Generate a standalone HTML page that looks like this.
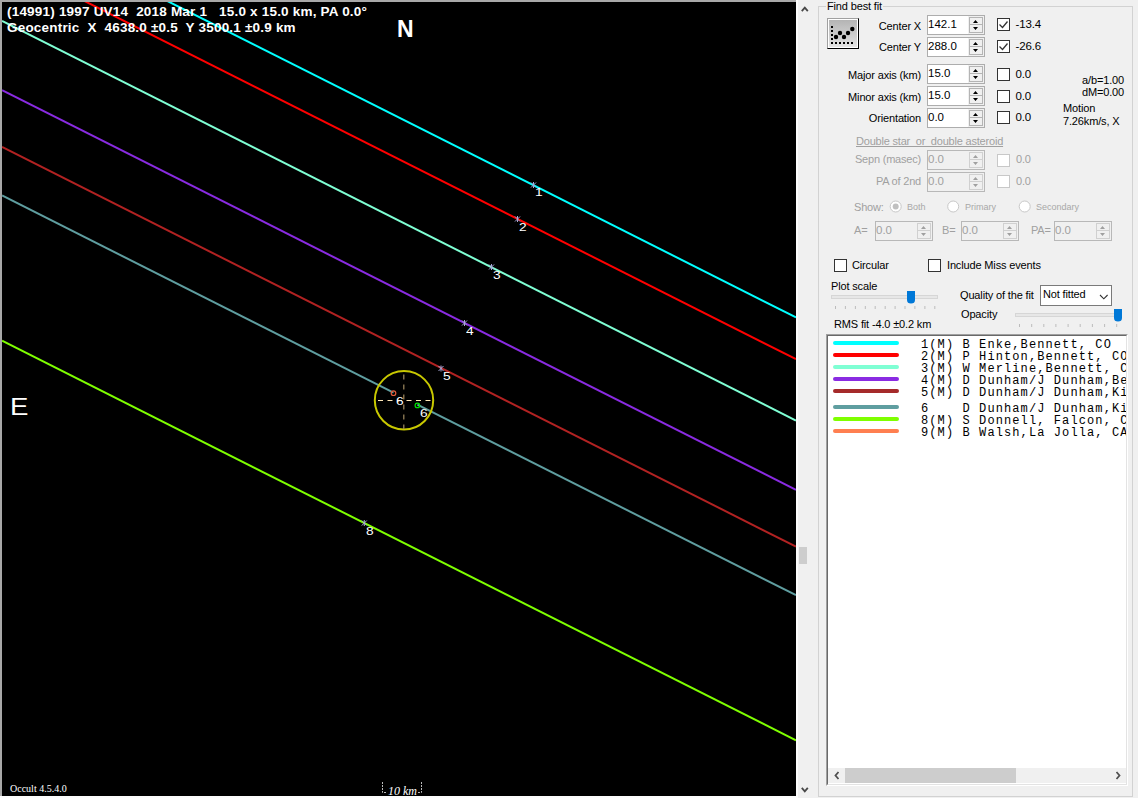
<!DOCTYPE html><html><head><meta charset="utf-8"><style>
*{margin:0;padding:0;box-sizing:border-box}
html,body{width:1138px;height:798px;overflow:hidden;background:#f0f0f0;font-family:"Liberation Sans",sans-serif}
.a{position:absolute;white-space:pre;line-height:1}
#plot{position:absolute;left:2px;top:2px;width:794px;height:794px;background:#000;overflow:hidden}
.w{color:#fff}
.hd{font-weight:bold;font-size:13.5px;color:#fff;letter-spacing:0.2px}
.lb{font-size:11px;color:#000;letter-spacing:-0.15px}
.ds{font-size:11px;color:#a0a0a0;letter-spacing:-0.2px}
.sm{font-size:9px;color:#a8a8a8}
.tb{position:absolute;width:58px;height:20px;background:#fff;border:1px solid #adadad}
.tb.d{background:#f0f0f0;border-color:#b8b8b8}
.tb span{position:absolute;left:0px;top:3px;font-size:11.5px;line-height:1;color:#000}
.tb.d span{color:#a0a0a0}
.sq{position:absolute;left:40px;top:0;width:16px;height:18px;background:#f0f0f0}.sp{position:absolute;left:41px;top:1px;width:14px;height:16px;background:#f0f0f0;border:1px solid #b4b4b4}
.d .sp{border-color:#d0d0d0}
.cb{position:absolute;width:13px;height:13px;border:1px solid #333;background:#fff}
.cb.d{border-color:#c8c8c8}
.mono{font-family:"Liberation Mono",monospace;font-size:12px;letter-spacing:1.1px;color:#000}
</style></head><body>
<div style="position:absolute;left:0;top:0;width:796px;height:2px;background:#a8a8a8"></div>
<div style="position:absolute;left:0;top:0;width:2px;height:796px;background:#a8a8a8"></div>
<div style="position:absolute;left:796px;top:0;width:2px;height:798px;background:#fcfcfc"></div>
<div style="position:absolute;left:0;top:796px;width:798px;height:2px;background:#fcfcfc"></div>
<div id="plot"><svg width="794" height="794" style="position:absolute;left:0;top:0" viewBox="2 2 794 794"><g stroke-width="2" fill="none"><line x1="2" y1="-82.2" x2="796" y2="317.42" stroke="#00ffff"/><line x1="2" y1="-40.5" x2="796" y2="359.12" stroke="#ff0000"/><line x1="2" y1="20.9" x2="796" y2="420.52" stroke="#7fffd4"/><line x1="2" y1="90.15" x2="796" y2="489.77" stroke="#8a2be2"/><line x1="2" y1="147" x2="796" y2="546.62" stroke="#b22222"/><line x1="2" y1="340.7" x2="796" y2="740.32" stroke="#7fff00"/><line x1="2" y1="195.5" x2="393.5" y2="392.54" stroke="#5f9ea0"/><line x1="417.4" y1="404.57" x2="796" y2="595.12" stroke="#5f9ea0"/><circle cx="404" cy="400.3" r="29.2" stroke="#c8c800"/>
<line x1="378" y1="400.5" x2="433" y2="400.5" stroke="#ffe8b8" stroke-width="1.2" stroke-dasharray="5 4.5"/>
<line x1="403.8" y1="374.6" x2="403.8" y2="429" stroke="#a08a60" stroke-width="1.2" stroke-dasharray="5 5"/>
<circle cx="393.5" cy="393.2" r="2.3" stroke="#e05a3a" stroke-width="1.2"/>
<circle cx="417.4" cy="405.4" r="2.3" stroke="#00e000" stroke-width="1.2"/>
</g><g stroke="#a8a8d8" stroke-width="1" fill="none"><path d="M531.0 182.5l5 5M531.0 187.5l5-5M533.5 182v6"/><path d="M515.0 216.5l5 5M515.0 221.5l5-5M517.5 216v6"/><path d="M489.0 264.5l5 5M489.0 269.5l5-5M491.5 264v6"/><path d="M462.0 320.5l5 5M462.0 325.5l5-5M464.5 320v6"/><path d="M438.5 366.0l5 5M438.5 371.0l5-5M441 365.5v6"/><path d="M361.8 520.5l5 5M361.8 525.5l5-5M364.3 520v6"/></g></svg></div>
<div class="a hd" style="left:7px;top:5px;">(14991) 1997 UV14  2018 Mar 1   15.0 x 15.0 km, PA 0.0°</div>
<div class="a hd" style="left:7px;top:21px;">Geocentric  X  4638.0 ±0.5  Y 3500.1 ±0.9 km</div>
<div class="a w" style="left:397px;top:18px;font-size:23px;font-weight:bold">N</div>
<div class="a w" style="left:10px;top:396px;font-size:23px;transform:scaleX(1.2);transform-origin:0 0">E</div>
<div class="a w" style="left:534.5px;top:187px;font-size:11px;transform:scaleX(1.25);transform-origin:0 0">1</div>
<div class="a w" style="left:518.5px;top:222px;font-size:11px;transform:scaleX(1.25);transform-origin:0 0">2</div>
<div class="a w" style="left:492.5px;top:270px;font-size:11px;transform:scaleX(1.25);transform-origin:0 0">3</div>
<div class="a w" style="left:465.5px;top:326px;font-size:11px;transform:scaleX(1.25);transform-origin:0 0">4</div>
<div class="a w" style="left:442.5px;top:371px;font-size:11px;transform:scaleX(1.25);transform-origin:0 0">5</div>
<div class="a w" style="left:395.5px;top:396px;font-size:11px;transform:scaleX(1.25);transform-origin:0 0">6</div>
<div class="a w" style="left:419.5px;top:408px;font-size:11px;transform:scaleX(1.25);transform-origin:0 0">6</div>
<div class="a w" style="left:365.5px;top:526px;font-size:11px;transform:scaleX(1.25);transform-origin:0 0">8</div>
<div class="a w" style="left:10px;top:784px;font-size:10px;font-family:'Liberation Serif',serif">Occult 4.5.4.0</div>
<div class="a w" style="left:388px;top:785px;font-size:12px;font-family:'Liberation Serif',serif;font-style:italic">10 km</div>
<svg style="position:absolute;left:0;top:0" width="800" height="798"><path d="M382.5 782v10.5h3.5M421.5 782v10.5h-3.5" stroke="#b8b8b8" fill="none" stroke-width="1" stroke-dasharray="2 1"/></svg>
<svg style="position:absolute;left:798px;top:0" width="340" height="798">
 <path d="M3.8 11.2l3-3.6 3 3.6M3.8 787.8l3 3.6 3-3.6" stroke="#484848" stroke-width="1.8" fill="none"/>
 <rect x="1" y="547" width="8" height="17" fill="#cdcdcd"/>
 <rect x="20.5" y="6.5" width="314" height="790" fill="none" stroke="#d2d2d2"/>
</svg>
<div class="a lb" style="left:826px;top:1px;background:#f0f0f0;padding:0 1px">Find best fit</div>
<div style="position:absolute;left:827px;top:18px;width:32px;height:31px;border:1px solid #a0a0a0;border-right-color:#000;border-bottom-color:#000;background:#fff">
<div style="position:absolute;left:1px;top:1px;width:28px;height:27px;background:linear-gradient(#b4b4b4,#d0d0d0 60%,#e4e4e4)"></div>
<svg width="30" height="29" style="position:absolute;left:0;top:0"><g fill="#000">
<rect x="3" y="7" width="2" height="2"/><rect x="3" y="11" width="2" height="2"/><rect x="3" y="15" width="2" height="2"/><rect x="3" y="19" width="2" height="2"/>
<rect x="3" y="23" width="2" height="2"/><rect x="7" y="23" width="2" height="2"/><rect x="11" y="23" width="2" height="2"/><rect x="15" y="23" width="2" height="2"/><rect x="19" y="23" width="2" height="2"/><rect x="23" y="23" width="2" height="2"/>
<circle cx="8" cy="18" r="2.2"/><circle cx="12" cy="14" r="2.2"/><circle cx="16" cy="18" r="2.2"/><circle cx="20" cy="14" r="2.2"/><circle cx="24.3" cy="10" r="2.2"/></g></svg></div>
<div class="a lb" style="right:217px;top:21px">Center X</div>
<div class="tb" style="left:927px;top:15px"><span>142.1</span><div class="sq"></div><div class="sp"><svg width="12" height="14" style="position:absolute;left:0;top:0"><path d="M3 5h5l-2.5-3zM3 9h5l-2.5 3z" fill="#000"/><path d="M0 6.5h12" stroke="#b4b4b4"/></svg></div></div>
<div class="cb" style="left:997px;top:18px"><svg width="11" height="11" style="position:absolute;left:0;top:0"><path d="M1.5 5.5l3 3 5-6" stroke="#333" stroke-width="1.3" fill="none"/></svg></div>
<div class="a lb" style="left:1015.5px;top:19px;font-size:11.5px">-13.4</div>
<div class="a lb" style="right:217px;top:42px">Center Y</div>
<div class="tb" style="left:927px;top:37px"><span>288.0</span><div class="sq"></div><div class="sp"><svg width="12" height="14" style="position:absolute;left:0;top:0"><path d="M3 5h5l-2.5-3zM3 9h5l-2.5 3z" fill="#000"/><path d="M0 6.5h12" stroke="#b4b4b4"/></svg></div></div>
<div class="cb" style="left:997px;top:40px"><svg width="11" height="11" style="position:absolute;left:0;top:0"><path d="M1.5 5.5l3 3 5-6" stroke="#333" stroke-width="1.3" fill="none"/></svg></div>
<div class="a lb" style="left:1015.5px;top:41px;font-size:11.5px">-26.6</div>
<div class="a lb" style="right:217px;top:70px">Major axis (km)</div>
<div class="tb" style="left:927px;top:64px"><span>15.0</span><div class="sq"></div><div class="sp"><svg width="12" height="14" style="position:absolute;left:0;top:0"><path d="M3 5h5l-2.5-3zM3 9h5l-2.5 3z" fill="#000"/><path d="M0 6.5h12" stroke="#b4b4b4"/></svg></div></div>
<div class="cb" style="left:997px;top:68px"></div>
<div class="a lb" style="left:1015.5px;top:69px;font-size:11.5px">0.0</div>
<div class="a lb" style="right:217px;top:92px">Minor axis (km)</div>
<div class="tb" style="left:927px;top:86px"><span>15.0</span><div class="sq"></div><div class="sp"><svg width="12" height="14" style="position:absolute;left:0;top:0"><path d="M3 5h5l-2.5-3zM3 9h5l-2.5 3z" fill="#000"/><path d="M0 6.5h12" stroke="#b4b4b4"/></svg></div></div>
<div class="cb" style="left:997px;top:90px"></div>
<div class="a lb" style="left:1015.5px;top:91px;font-size:11.5px">0.0</div>
<div class="a lb" style="right:217px;top:113px">Orientation</div>
<div class="tb" style="left:927px;top:108px"><span>0.0</span><div class="sq"></div><div class="sp"><svg width="12" height="14" style="position:absolute;left:0;top:0"><path d="M3 5h5l-2.5-3zM3 9h5l-2.5 3z" fill="#000"/><path d="M0 6.5h12" stroke="#b4b4b4"/></svg></div></div>
<div class="cb" style="left:997px;top:111px"></div>
<div class="a lb" style="left:1015.5px;top:112px;font-size:11.5px">0.0</div>
<div class="a lb" style="right:14px;top:75px">a/b=1.00</div>
<div class="a lb" style="right:14px;top:87px">dM=0.00</div>
<div class="a lb" style="left:1063px;top:103px;">Motion</div>
<div class="a lb" style="left:1063px;top:116px;">7.26km/s, X</div>
<div class="a ds" style="left:856px;top:136px;text-decoration:underline">Double star  or  double asteroid</div>
<div class="a ds" style="right:217px;top:154px">Sepn (masec)</div>
<div class="tb d" style="left:927px;top:150px"><span>0.0</span><div class="sq"></div><div class="sp"><svg width="12" height="14" style="position:absolute;left:0;top:0"><path d="M3 5h5l-2.5-3zM3 9h5l-2.5 3z" fill="#a0a0a0"/><path d="M0 6.5h12" stroke="#d0d0d0"/></svg></div></div>
<div class="cb d" style="left:997px;top:154px"></div>
<div class="a ds" style="left:1016px;top:154px;">0.0</div>
<div class="a ds" style="right:217px;top:176px">PA of 2nd</div>
<div class="tb d" style="left:927px;top:172px"><span>0.0</span><div class="sq"></div><div class="sp"><svg width="12" height="14" style="position:absolute;left:0;top:0"><path d="M3 5h5l-2.5-3zM3 9h5l-2.5 3z" fill="#a0a0a0"/><path d="M0 6.5h12" stroke="#d0d0d0"/></svg></div></div>
<div class="cb d" style="left:997px;top:175px"></div>
<div class="a ds" style="left:1016px;top:176px;">0.0</div>
<div class="a ds" style="left:854px;top:202px;">Show:</div>
<svg style="position:absolute;left:880px;top:195px" width="170" height="24">
<circle cx="15.7" cy="11.5" r="5.5" fill="#fff" stroke="#c8c8c8"/><circle cx="15.7" cy="11.5" r="3" fill="#c0c0c0"/>
<circle cx="73.2" cy="11.5" r="5.5" fill="#fff" stroke="#c8c8c8"/>
<circle cx="144.7" cy="11.5" r="5.5" fill="#fff" stroke="#c8c8c8"/></svg>
<div class="a sm" style="left:907px;top:203px;">Both</div>
<div class="a sm" style="left:965px;top:203px;">Primary</div>
<div class="a sm" style="left:1036px;top:203px;">Secondary</div>
<div class="a ds" style="left:854px;top:225px;">A=</div>
<div class="tb d" style="left:875px;top:221px"><span>0.0</span><div class="sq"></div><div class="sp"><svg width="12" height="14" style="position:absolute;left:0;top:0"><path d="M3 5h5l-2.5-3zM3 9h5l-2.5 3z" fill="#a0a0a0"/><path d="M0 6.5h12" stroke="#d0d0d0"/></svg></div></div>
<div class="a ds" style="left:942px;top:225px;">B=</div>
<div class="tb d" style="left:961px;top:221px"><span>0.0</span><div class="sq"></div><div class="sp"><svg width="12" height="14" style="position:absolute;left:0;top:0"><path d="M3 5h5l-2.5-3zM3 9h5l-2.5 3z" fill="#a0a0a0"/><path d="M0 6.5h12" stroke="#d0d0d0"/></svg></div></div>
<div class="a ds" style="left:1031px;top:225px;">PA=</div>
<div class="tb d" style="left:1054px;top:221px"><span>0.0</span><div class="sq"></div><div class="sp"><svg width="12" height="14" style="position:absolute;left:0;top:0"><path d="M3 5h5l-2.5-3zM3 9h5l-2.5 3z" fill="#a0a0a0"/><path d="M0 6.5h12" stroke="#d0d0d0"/></svg></div></div>
<div class="cb" style="left:834px;top:259px"></div>
<div class="a lb" style="left:852px;top:260px;">Circular</div>
<div class="cb" style="left:928px;top:259px"></div>
<div class="a lb" style="left:947px;top:260px;">Include Miss events</div>
<div class="a lb" style="left:831px;top:281px;">Plot scale</div>
<div class="a lb" style="left:960px;top:290px;">Quality of the fit</div>
<div class="a lb" style="left:961px;top:309px;">Opacity</div>
<div class="a lb" style="left:834px;top:319px;">RMS fit -4.0 ±0.2 km</div>
<svg style="position:absolute;left:798px;top:280px" width="340" height="56">
<rect x="33.5" y="15.5" width="106" height="3" fill="#e7e7e7" stroke="#d6d6d6"/>
<path d="M109 11h8v9q0 3.5-4 3.5t-4-3.5z" fill="#0078d7"/>
<g stroke="#bcbcbc"><path d="M37.5 26v3"/><path d="M47.4 26v3"/><path d="M57.4 26v3"/><path d="M67.3 26v3"/><path d="M77.2 26v3"/><path d="M87.2 26v3"/><path d="M97.1 26v3"/><path d="M107.0 26v3"/><path d="M116.9 26v3"/><path d="M126.9 26v3"/><path d="M136.8 26v3"/></g>
<rect x="217.5" y="33.5" width="106" height="3" fill="#e7e7e7" stroke="#d6d6d6"/>
<path d="M316 29h8v9q0 3.5-4 3.5t-4-3.5z" fill="#0078d7"/>
<g stroke="#bcbcbc"><path d="M221.5 44v3"/><path d="M233.7 44v3"/><path d="M245.8 44v3"/><path d="M257.9 44v3"/><path d="M270.1 44v3"/><path d="M282.2 44v3"/><path d="M294.4 44v3"/><path d="M306.6 44v3"/><path d="M318.7 44v3"/></g>
</svg>
<div style="position:absolute;left:1040px;top:285px;width:72px;height:21px;background:#fff;border:1px solid #7a7a7a">
<div class="a lb" style="left:2px;top:3px">Not fitted</div>
<svg width="12" height="8" style="position:absolute;left:57.5px;top:7.5px"><path d="M1 1l3.8 3.8 3.8-3.8" stroke="#333" stroke-width="1.1" fill="none"/></svg></div>
<div style="position:absolute;left:826px;top:334px;width:302px;height:452px;border:1px solid;border-color:#a0a0a0 #fff #fff #a0a0a0"><div style="position:absolute;left:0;top:0;width:300px;height:450px;background:#fff;border:1px solid;border-color:#696969 #e3e3e3 #e3e3e3 #696969;overflow:hidden">
<div style="position:absolute;left:5px;top:5px;width:66px;height:4px;background:#00ffff;border-radius:2px"></div>
<div class="a mono" style="left:93px;top:3px">1(M) B Enke,Bennett, CO</div>
<div style="position:absolute;left:5px;top:17px;width:66px;height:4px;background:#ff0000;border-radius:2px"></div>
<div class="a mono" style="left:93px;top:15px">2(M) P Hinton,Bennett, CO</div>
<div style="position:absolute;left:5px;top:29px;width:66px;height:4px;background:#7fffd4;border-radius:2px"></div>
<div class="a mono" style="left:93px;top:27px">3(M) W Merline,Bennett, CO</div>
<div style="position:absolute;left:5px;top:41px;width:66px;height:4px;background:#8a2be2;border-radius:2px"></div>
<div class="a mono" style="left:93px;top:39px">4(M) D Dunham/J Dunham,Bennett</div>
<div style="position:absolute;left:5px;top:53px;width:66px;height:4px;background:#a52a2a;border-radius:2px"></div>
<div class="a mono" style="left:93px;top:51px">5(M) D Dunham/J Dunham,Kiowa</div>
<div style="position:absolute;left:5px;top:69px;width:66px;height:4px;background:#5f9ea0;border-radius:2px"></div>
<div class="a mono" style="left:93px;top:67px">6    D Dunham/J Dunham,Kiowa</div>
<div style="position:absolute;left:5px;top:81px;width:66px;height:4px;background:#7fff00;border-radius:2px"></div>
<div class="a mono" style="left:93px;top:79px">8(M) S Donnell, Falcon, CO</div>
<div style="position:absolute;left:5px;top:93px;width:66px;height:4px;background:#ff7f50;border-radius:2px"></div>
<div class="a mono" style="left:93px;top:91px">9(M) B Walsh,La Jolla, CA</div>
<div style="position:absolute;left:0;top:432px;width:298px;height:15px;background:#f0f0f0">
<div style="position:absolute;left:17px;top:0;width:171px;height:15px;background:#cdcdcd"></div>
<svg width="298" height="15" style="position:absolute;left:0;top:0"><path d="M10.5 4l-3 3.5 3 3.5M288.5 4l3 3.5-3 3.5" stroke="#505050" stroke-width="1.8" fill="none"/></svg>
</div></div></div>
</body></html>
